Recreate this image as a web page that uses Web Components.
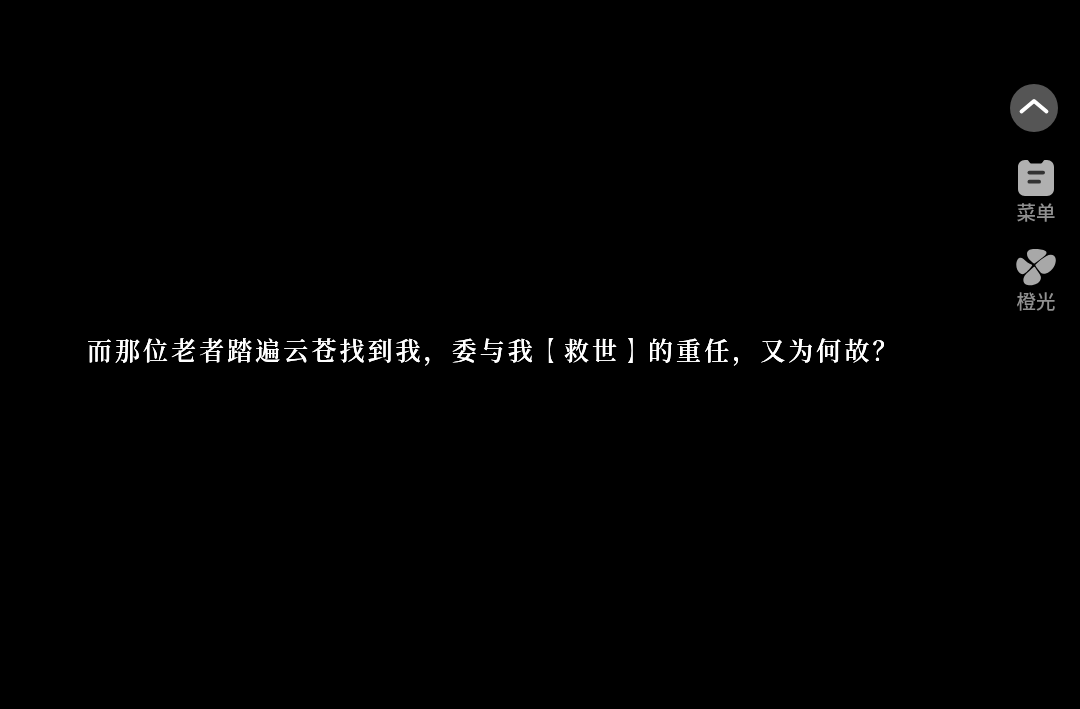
<!DOCTYPE html>
<html lang="zh-CN">
<head>
<meta charset="utf-8">
<title>橙光</title>
<style>
  html, body { margin: 0; background: #000; }
</style>
</head>
<body>
<game-stage>
  <dialogue-line>而那位老者踏遍云苍找到我，委与我<span class="open">【</span>救世<span class="close">】</span>的重任，又为何故？</dialogue-line>
  <side-rail slot="rail">
    <round-button></round-button>
    <rail-item label="菜单" style="--item-top: 28px">
      <svg width="36" height="36" viewBox="0 0 36 36">
        <path fill="#b0b0b0" d="M7 0h1.500c1.200 0 1.800.5 2.400 1.400.7 1.200 1.500 2.100 3 2.100h8.200c1.500 0 2.300-.9 3-2.100C25.700.5 26.300 0 27.500 0H29c4 0 7 3 7 7v22c0 4-3 7-7 7H7c-4 0-7-3-7-7V7c0-4 3-7 7-7z"/>
        <rect x="9.500" y="10.700" width="17.500" height="3.800" rx="1.900" fill="#333"/>
        <rect x="9.500" y="19.800" width="13.500" height="3.800" rx="1.900" fill="#333"/>
      </svg>
    </rail-item>
    <rail-item label="橙光" style="--item-top: 27px">
      <svg width="40" height="37" viewBox="0 0 40 37">
        <path fill="#a8a8a8" d="M17.600 14.200C14 11.500 11 8.500 11 5c0-3 2.500-4.700 6-4.900 4-.2 10 .3 12.500 1.900 1.500 1 1.300 3-.5 4.500-3 2.500-7 5.500-10.200 7.700q-.6.400-1.200 0z"/>
        <path fill="#a8a8a8" d="M19.600 15.400c2.900-2.900 7.400-6.400 10.900-8.400 2.500-1.500 5.500-2 7.500-.2 2 1.800 2.200 4.700 1.300 7.700-1.300 4.500-4.800 8.300-8.800 9.800-2.500.9-4.500.7-5.700-.5-1.800-2-4-4.800-5.300-7q-.3-.8.100-1.400z"/>
        <path fill="#a8a8a8" d="M16 15.700c-3-.7-6-3.200-8.500-5.700-2-1.700-4.500-1.700-5.700.3C0 13-.2 17 1.200 20.500 2.500 23.500 5 25.800 7.500 25c2.500-.8 6-5 8.300-8q.5-.7.200-1.300z"/>
        <path fill="#a8a8a8" d="M17.700 17.900c-2.700 2.600-6.700 5.600-8.900 8.600-2 3-2 7 .7 8.700 3 1.800 8 1.400 11.500-.6 3-1.600 4.500-4.600 3.700-7.300-.7-2.300-3.900-6.300-5.800-9.300q-.6-.6-1.200-.1z"/>
      </svg>
    </rail-item>
  </side-rail>
</game-stage>

<script>
class GameStage extends HTMLElement {
  constructor() {
    super();
    this.attachShadow({mode: 'open'}).innerHTML = `
      <style>
        :host { display: flex; height: 709px; background: #000; overflow: hidden; }
        main { flex: 1; min-width: 0; display: flex; align-items: center; padding-bottom: 12px; }
        aside { flex: none; width: 70px; filter: blur(.4px); }
      </style>
      <main><slot></slot></main>
      <aside><slot name="rail"></slot></aside>
    `;
  }
}

class DialogueLine extends HTMLElement {
  constructor() {
    super();
    this.attachShadow({mode: 'open'}).innerHTML = `
      <style>
        :host {
          display: block;
          padding-left: 87px;
          color: #fff;
          font: 600 25px/36px "Noto Serif CJK SC", "Noto Sans CJK SC", "Liberation Serif", serif;
          letter-spacing: 3.05px;
          white-space: nowrap;
          text-shadow: 0 0 .6px #fff;
          filter: blur(.4px);
        }
        /* the brackets are narrow in the game font */
        ::slotted(.open), ::slotted(.close) { display: inline-block; font-weight: 900; transform: scaleX(.5); }
        ::slotted(.open) { transform-origin: 10px 50%; }
        ::slotted(.close) { transform-origin: 16px 50%; }
      </style>
      <slot></slot>
    `;
  }
}

class SideRail extends HTMLElement {
  constructor() {
    super();
    this.attachShadow({mode: 'open'}).innerHTML = `
      <style>
        :host { display: flex; flex-direction: column; align-items: flex-start; padding-top: 84px; }
      </style>
      <slot></slot>
    `;
  }
}

class RoundButton extends HTMLElement {
  constructor() {
    super();
    this.attachShadow({mode: 'open'}).innerHTML = `
      <style>
        :host {
          display: flex;
          align-items: center;
          justify-content: center;
          width: 48px;
          height: 48px;
          border-radius: 50%;
          background: #555;
        }
      </style>
      <svg width="48" height="48" viewBox="0 0 48 48">
        <path d="M11.500 27.500 24 17l12.500 10.500" fill="none" stroke="#fff" stroke-width="3.800" stroke-linecap="round" stroke-linejoin="round"/>
      </svg>
    `;
  }
}

class RailItem extends HTMLElement {
  constructor() {
    super();
    this.attachShadow({mode: 'open'}).innerHTML = `
      <style>
        :host {
          display: flex;
          flex-direction: column;
          align-items: center;
          width: 52px;
          margin-top: var(--item-top, 0);
          color: #909090;
          font: 500 19.500px/20px "Noto Sans CJK SC", sans-serif;
        }
        .icon { display: flex; height: 37px; align-items: flex-start; }
        .label { margin-top: 5px; white-space: nowrap; }
      </style>
      <div class="icon"><slot></slot></div>
      <div class="label"></div>
    `;
  }

  connectedCallback() {
    this.shadowRoot.querySelector('.label').textContent = this.getAttribute('label');
  }
}

customElements.define('game-stage', GameStage);
customElements.define('dialogue-line', DialogueLine);
customElements.define('side-rail', SideRail);
customElements.define('round-button', RoundButton);
customElements.define('rail-item', RailItem);
</script>
</body>
</html>
